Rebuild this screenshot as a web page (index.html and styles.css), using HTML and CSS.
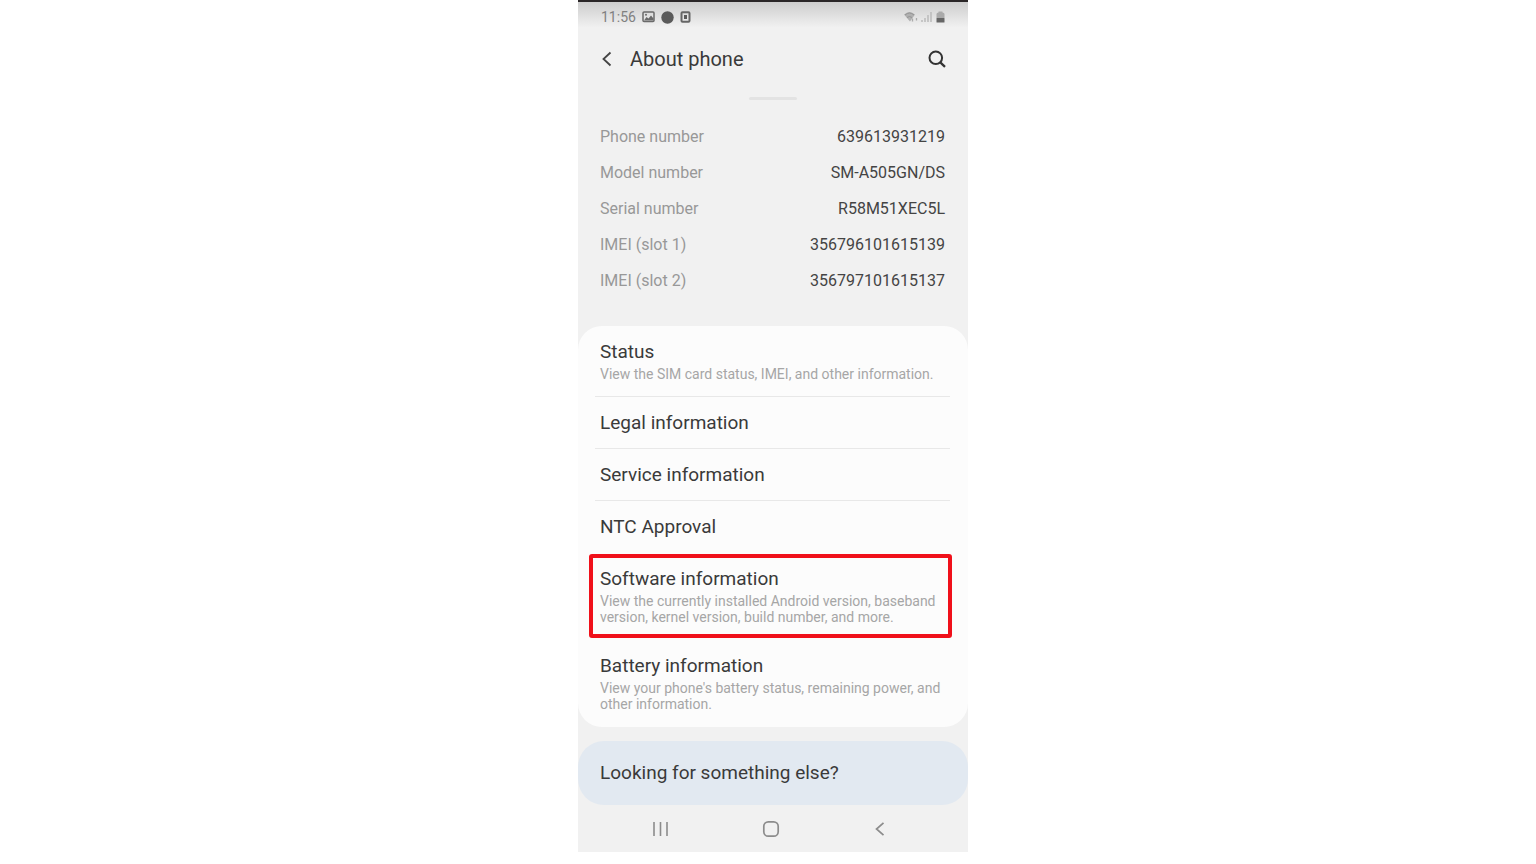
FILE: index.html
```html
<!DOCTYPE html>
<html lang="en">
<head>
    <meta charset="UTF-8">
    <meta name="viewport" content="width=device-width, initial-scale=1">
    <title>About phone</title>
    <link rel="stylesheet" href="styles.css">
</head>
<body>
    <div class="phone">
        <div class="status-bar">
            <span class="clock">11:56</span>
            <!-- picture -->
            <svg width="13" height="12" viewBox="0 0 13 12">
                <rect x="1" y="1" width="11" height="9.5" rx="1" fill="none" stroke="#6a6a6a" stroke-width="1.5"/>
                <path d="M2 9.5L4.500 6l2 1.500L9 4.500l2.500 3v2z" fill="#6a6a6a"/>
                <circle cx="4" cy="3.8" r="1" fill="#6a6a6a"/>
            </svg>
            <svg width="13" height="13" viewBox="0 0 13 13">
                <circle cx="6.5" cy="6.5" r="6.2" fill="#5a5a5a"/>
            </svg>
            <svg width="11" height="12" viewBox="0 0 11 12">
                <rect x="1.5" y="1.2" width="8" height="9.6" rx="1" fill="none" stroke="#666" stroke-width="2"/>
                <rect x="4" y="4" width="3" height="4" fill="#5a5a5a"/>
            </svg>
            <div class="signals">
                <!-- wifi -->
                <svg width="15" height="12" viewBox="0 0 15 12">
                    <path d="M0 3.500Q5.500-1.500 11 3.500L6 10.500z" fill="#b0b0b0"/>
                    <path d="M1 4Q5.500 0 10 4M3 6.500Q5.500 4.500 8 6.500" fill="none" stroke="#949494"/>
                    <path d="M8.500 7.500v3M12.500 7v2.500" fill="none" stroke="#aaa" stroke-width="1.300"/>
                </svg>
                <svg width="11" height="12" viewBox="0 0 11 12">
                    <path d="M1 9v2M4 7v4M7 4v7M10 1v10" fill="none" stroke="#bbb" stroke-width="1.5"/>
                </svg>
                <!-- battery -->
                <svg class="battery" width="9" height="12" viewBox="0 0 9 12">
                    <path d="M.5 3Q.5 1.500 2.500 1.500V.5h4v1Q8.500 1.500 8.500 3v4h-8z" fill="#aaa"/>
                    <rect x=".5" y="7" width="8" height="4.5" rx=".5" fill="#666"/>
                </svg>
            </div>
        </div>

        <header class="header">
            <button class="icon-button" type="button" aria-label="Back">
                <svg width="12" height="18" viewBox="0 0 12 18">
                    <path d="M10.500 2.500L3.500 9l7 6.500" fill="none" stroke="#444" stroke-width="1.800"/>
                </svg>
            </button>
            <h1>About phone</h1>
            <button class="icon-button" type="button" aria-label="Search">
                <svg width="18" height="18" viewBox="0 0 18 18">
                    <circle cx="7.8" cy="7.8" r="6.3" fill="none" stroke="#333" stroke-width="2"/>
                    <path d="M12.300 12.300l4.700 4.500" stroke="#333" stroke-width="2.300"/>
                </svg>
            </button>
        </header>

        <div class="handle"></div>

        <dl class="info">
            <div><dt>Phone number</dt><dd>639613931219</dd></div>
            <div><dt>Model number</dt><dd>SM-A505GN/DS</dd></div>
            <div><dt>Serial number</dt><dd>R58M51XEC5L</dd></div>
            <div><dt>IMEI (slot 1)</dt><dd>356796101615139</dd></div>
            <div><dt>IMEI (slot 2)</dt><dd>356797101615137</dd></div>
        </dl>

        <nav class="card">
            <a class="row detail" href="#status">
                <span class="name">Status</span>
                <span class="desc">View the SIM card status, IMEI, and other information.</span>
            </a>
            <a class="row" href="#legal"><span class="name">Legal information</span></a>
            <a class="row" href="#service"><span class="name">Service information</span></a>
            <a class="row plain" href="#ntc"><span class="name">NTC Approval</span></a>
            <a class="row detail plain highlight" href="#software">
                <span class="name">Software information</span>
                <span class="desc">View the currently installed Android version, baseband version, kernel version, build number, and more.</span>
            </a>
            <a class="row detail plain" href="#battery">
                <span class="name">Battery information</span>
                <span class="desc">View your phone's battery status, remaining power, and other information.</span>
            </a>
        </nav>

        <button class="more" type="button">Looking for something else?</button>

        <div class="nav-bar">
            <button class="icon-button" type="button" aria-label="Recent apps">
                <svg width="16" height="16" viewBox="0 0 16 16">
                    <path d="M2 1v14M8.500 1v14M15 1v14" stroke="#8c8c8c" stroke-width="1.600"/>
                </svg>
            </button>
            <button class="icon-button" type="button" aria-label="Home">
                <svg width="18" height="18" viewBox="0 0 18 18">
                    <rect x="1.8" y="1.8" width="14.4" height="14.4" rx="4.5" fill="none" stroke="#8c8c8c" stroke-width="1.7"/>
                </svg>
            </button>
            <button class="icon-button" type="button" aria-label="Back">
                <svg width="12" height="16" viewBox="0 0 12 16">
                    <path d="M9.500 1.800L2.500 8l7 6.200" fill="none" stroke="#8c8c8c" stroke-width="1.700"/>
                </svg>
            </button>
        </div>
    </div>
</body>
</html>
```
FILE: styles.css
```css
* {
    box-sizing: border-box;
}
body {
    margin: 0;
    padding-left: 10px;
    background: #fff;
    font-family: Roboto, Arial, sans-serif;
    color: #3a3a3a;
}
.phone {
    max-width: 390px;
    margin: 0 auto;
    background: #f1f1f1;
    border-top: 2px solid #2a2627;
}
svg {
    display: block;
}
button {
    border: none;
    background: none;
    font-family: inherit;
    color: inherit;
    cursor: pointer;
}
.icon-button {
    padding: 0;
}
.status-bar {
    display: flex;
    align-items: center;
    gap: 6px;
    height: 30px;
    padding: 0 23px;
    background: linear-gradient(#cdcdcd, #f1f1f1 85%);
}
.clock {
    font-size: 14px;
    color: #808080;
}
.signals {
    display: flex;
    gap: 2px;
    margin-left: auto;
}
.battery {
    margin-left: 2px;
}
.header {
    display: flex;
    align-items: center;
    gap: 18px;
    height: 54px;
    padding: 0 22px;
}
.header h1 {
    flex: 1;
    margin: 0;
    font-size: 20px;
    font-weight: 400;
}
.handle {
    width: 48px;
    height: 3px;
    margin: 11px auto 0;
    border-radius: 2px;
    background: #e3e3e3;
}
.info {
    margin: 0;
    padding: 19px 23px 27px 22px;
}
.info div {
    display: flex;
    justify-content: space-between;
    line-height: 36px;
    font-size: 16px;
}
.info dt {
    color: #989898;
}
.info dd {
    margin: 0;
    color: #444;
}
.card {
    padding: 0 18px 0 17px;
    border-radius: 24px;
    background: #fcfcfc;
}
.row {
    display: block;
    position: relative;
    padding: 14px 5px 13px;
    border-bottom: 1px solid #e8e8e8;
    color: inherit;
    text-decoration: none;
}
.row span {
    display: block;
}
.detail {
    padding-bottom: 14px;
}
.plain {
    border-color: transparent;
}
.name {
    font-size: 19px;
    line-height: 24px;
}
.row .desc {
    margin-top: 2px;
    font-size: 14px;
    line-height: 16px;
    color: #a6a6a6;
}
.highlight::after {
    content: "";
    position: absolute;
    inset: 1px -2px 1px -6px;
    border: 4px solid #f0101a;
    border-radius: 3px;
}
.more {
    display: block;
    width: 100%;
    margin-top: 14px;
    padding: 20px 22px;
    border-radius: 26px;
    background: #e2e9f1;
    font-size: 19px;
    line-height: 24px;
    text-align: left;
}
.nav-bar {
    display: flex;
    justify-content: center;
    align-items: center;
    gap: 94px;
    height: 47px;
    padding-right: 8px;
}
```
